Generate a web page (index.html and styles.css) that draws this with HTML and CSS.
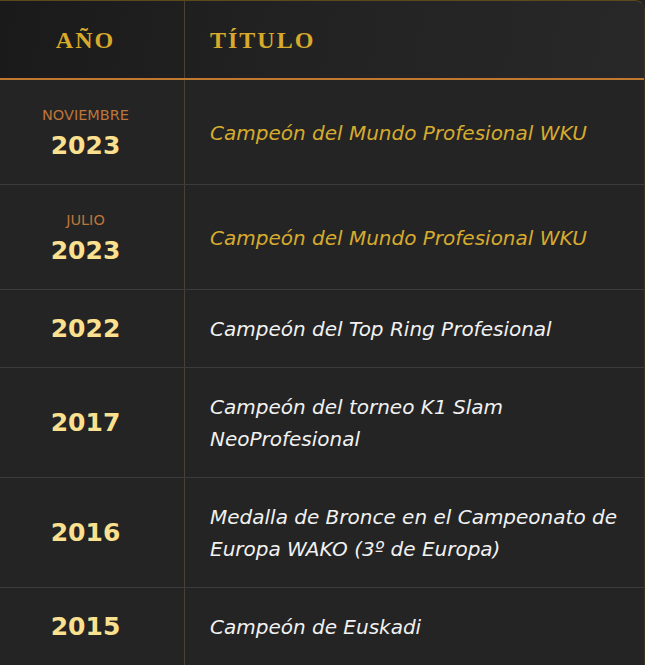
FILE: index.html
```html
<!DOCTYPE html>
<html lang="es">
<head>
<meta charset="utf-8">
<title>Palmarés</title>
<link rel="stylesheet" href="styles.css">
</head>
<body>
<div class="table">
  <div class="row head">
    <div class="cell year-col"><span class="th">AÑO</span></div>
    <div class="cell title-col"><span class="th">TÍTULO</span></div>
  </div>
  <div class="row">
    <div class="cell year-col"><span class="month">NOVIEMBRE</span><span class="year">2023</span></div>
    <div class="cell title-col gold">Campeón del Mundo Profesional WKU</div>
  </div>
  <div class="row">
    <div class="cell year-col"><span class="month">JULIO</span><span class="year">2023</span></div>
    <div class="cell title-col gold">Campeón del Mundo Profesional WKU</div>
  </div>
  <div class="row">
    <div class="cell year-col"><span class="year">2022</span></div>
    <div class="cell title-col">Campeón del Top Ring Profesional</div>
  </div>
  <div class="row">
    <div class="cell year-col"><span class="year">2017</span></div>
    <div class="cell title-col">Campeón del torneo K1 Slam<br>NeoProfesional</div>
  </div>
  <div class="row">
    <div class="cell year-col"><span class="year">2016</span></div>
    <div class="cell title-col">Medalla de Bronce en el Campeonato de Europa WAKO (3º de Europa)</div>
  </div>
  <div class="row last">
    <div class="cell year-col"><span class="year">2015</span></div>
    <div class="cell title-col">Campeón de Euskadi</div>
  </div>
</div>
</body>
</html>
```
FILE: styles.css
```css
html, body {
  margin: 0;
  padding: 0;
  background: #232323;
}
.table {
  width: 645px;
  height: 665px;
  overflow: hidden;
  box-sizing: border-box;
  border-top: 1px solid #5a4a1c;
  border-right: 1px solid #3a3424;
  border-radius: 0 10px 0 0;
  background: #242424;
  font-family: "DejaVu Sans", "Open Sans", sans-serif;
}
.row {
  display: grid;
  grid-template-columns: 185px 1fr;
  border-bottom: 1px solid #3b3b3b;
}
.row.last { border-bottom: none; }
.row.head {
  height: 77px;
  border-bottom: 2px solid #c07a30;
  background: linear-gradient(100deg, #1a1a1a 0%, #222222 45%, #282828 100%);
}
.cell {
  display: flex;
  flex-direction: column;
  justify-content: center;
}
.year-col {
  align-items: center;
  border-right: 1px solid #4a4133;
  padding: 22px 13px 22px 0;
}
.title-col {
  padding: 23px 18px 22px 25px;
  font-style: italic;
  font-weight: 400;
  font-size: 20px;
  line-height: 32px;
  color: #f1f1f1;
}
.title-col.gold { color: #d6ab2e; }
.head .cell { padding-top: 0; padding-bottom: 0; }
.head .title-col { padding-left: 25px; }
.th {
  font-family: "Liberation Serif", "Times New Roman", serif;
  font-style: normal;
  font-weight: 700;
  font-size: 24px;
  letter-spacing: 2px;
  color: #d7aa2c;
  line-height: 30px;
}
.month {
  font-size: 14.5px;
  line-height: 27px;
  color: #bd753a;
  font-weight: 400;
}
.year {
  font-size: 25px;
  line-height: 33px;
  font-weight: 700;
  color: #fae08f;
}
```
